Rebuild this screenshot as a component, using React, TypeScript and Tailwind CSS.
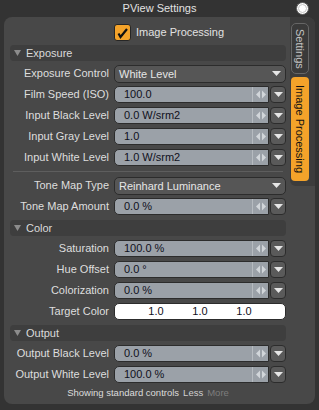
import React from 'react';

const FONT = "font-['Liberation_Sans',Arial,sans-serif]";

const SliderArrows: React.FC = () => (
  <svg width="10" height="9" viewBox="0 0 10 9">
    <polygon points="4,0.5 4,8.5 0,4.5" fill="#d2d6da" />
    <polygon points="6,0.5 6,8.5 10,4.5" fill="#d2d6da" />
  </svg>
);

const DownTri: React.FC = () => (
  <svg width="9" height="5" viewBox="0 0 9 5">
    <polygon points="0,0 9,0 4.5,5" fill="#e6e6e6" />
  </svg>
);

const Label: React.FC<{ text: string }> = ({ text }) => (
  <div className="w-[99px] shrink-0 text-right text-[11px] leading-[17px] text-[#dedede] whitespace-nowrap">{text}</div>
);

const NumberRow: React.FC<{ label: string; value: string }> = ({ label, value }) => (
  <div className="flex h-[17px] items-center gap-[5px]">
    <Label text={label} />
    <div className="flex h-[17px] w-[172px]">
      <div className="flex flex-1 rounded-l-[5px] border border-[#2c2c2c] bg-[#9ba1a8]">
        <div className="flex-1 pl-[9px] text-[11px] leading-[15px] text-[#10101c]">{value}</div>
        <div className="flex w-[16px] items-center justify-center border-l border-[#b6bbc0]">
          <SliderArrows />
        </div>
      </div>
      <div className="ml-px flex w-[16px] items-center justify-center rounded-[4px] border border-[#2c2c2c] bg-[#5a5a5a]">
        <DownTri />
      </div>
    </div>
  </div>
);

const ChoiceRow: React.FC<{ label: string; value: string }> = ({ label, value }) => (
  <div className="flex h-[17px] items-center gap-[5px]">
    <Label text={label} />
    <div className="flex h-[18px] w-[172px] items-center justify-between rounded-[5px] border border-[#2c2c2c] bg-[#565656] pl-[4px] pr-[4px]">
      <span className="text-[11px] leading-[16px] text-[#e6e6e6]">{value}</span>
      <DownTri />
    </div>
  </div>
);

const Header: React.FC<{ title: string; first?: boolean }> = ({ title, first }) => (
  <div
    className={`flex h-[16px] items-center gap-[5px] rounded-[4px] bg-[#3e3e3e] pl-[4px] ${first ? 'mt-[4px]' : 'mt-[5px]'}`}
  >
    <svg width="7" height="6" viewBox="0 0 7 6">
      <polygon points="0,0 7,0 3.5,6" fill="#8c8c8c" />
    </svg>
    <span className="text-[11px] leading-[16px] text-[#dadada]">{title}</span>
  </div>
);

const App: React.FC = () => {
  return (
    <div className={`h-[410px] w-[319px] bg-[#333333] ${FONT}`}>
      {/* title bar */}
      <div className="grid h-[17px] grid-cols-[1fr_auto_1fr] items-center">
        <div />
        <div className="text-[11px] leading-[17px] text-[#e2e2e2]">PView Settings</div>
        <div className="flex justify-end pr-[10px]">
          <div className="flex h-[13px] w-[13px] items-center justify-center rounded-full border border-[#5a5a5a] bg-white">
            <div className="h-[9px] w-[9px] rounded-full border border-[#c4c4c4] bg-white" />
          </div>
        </div>
      </div>

      {/* panel */}
      <div className="mx-[4px] flex h-[387px] w-[311px] overflow-hidden rounded-[8px] bg-[#484848]">
        <div className="ml-[6px] w-[277px] pt-[6px]">
          {/* enable */}
          <div className="flex h-[18px] items-center gap-[5px] pl-[104px]">
            <div className="flex h-[17px] w-[17px] items-center justify-center rounded-[3px] border border-[#262626] bg-[#f4a32a]">
              <svg width="13" height="13" viewBox="0 0 13 13">
                <polyline points="2.5,7.5 4.5,11 11,3" fill="none" stroke="#111" strokeWidth="2.2" />
              </svg>
            </div>
            <span className="text-[11px] text-[#e2e2e2]">Image Processing</span>
          </div>

          <Header title="Exposure" first />
          <div className="mt-[4px] flex flex-col gap-[4px]">
            <ChoiceRow label="Exposure Control" value="White Level" />
            <NumberRow label="Film Speed (ISO)" value="100.0" />
            <NumberRow label="Input Black Level" value="0.0 W/srm2" />
            <NumberRow label="Input Gray Level" value="1.0" />
            <NumberRow label="Input White Level" value="1.0 W/srm2" />
          </div>
          <div className="mx-[3px] mt-[5px] h-px bg-[#5e5e5e]" />
          <div className="mt-[5px] flex flex-col gap-[4px]">
            <ChoiceRow label="Tone Map Type" value="Reinhard Luminance" />
            <NumberRow label="Tone Map Amount" value="0.0 %" />
          </div>

          <Header title="Color" />
          <div className="mt-[4px] flex flex-col gap-[4px]">
            <NumberRow label="Saturation" value="100.0 %" />
            <NumberRow label="Hue Offset" value="0.0 °" />
            <NumberRow label="Colorization" value="0.0 %" />
            <div className="flex h-[17px] items-center gap-[5px]">
              <Label text="Target Color" />
              <div className="grid h-[17px] w-[172px] grid-cols-3 rounded-[5px] border border-[#2c2c2c] bg-white px-[19px] text-center text-[11px] leading-[15px] text-[#10101c]">
                <span>1.0</span>
                <span>1.0</span>
                <span>1.0</span>
              </div>
            </div>
          </div>

          <Header title="Output" />
          <div className="mt-[4px] flex flex-col gap-[4px]">
            <NumberRow label="Output Black Level" value="0.0 %" />
            <NumberRow label="Output White Level" value="100.0 %" />
          </div>

          <div className="mt-[3px] flex h-[14px] items-center justify-center gap-[4px] text-[9.5px]">
            <span className="text-[#dcdcdc]">Showing standard controls</span>
            <span className="text-[#cfcfcf]">Less</span>
            <span className="text-[#7d7d7d]">More</span>
          </div>
        </div>

        {/* tabs */}
        <div className="ml-[4px] flex h-[169px] w-[28px] flex-col gap-[3px] rounded-bl-[6px] bg-[#3c3c3c] pl-[1px] pt-[6px]">
          <div className="flex h-[51px] w-[18px] items-center justify-center rounded-[5px] border border-[#666666] bg-[#3a3a3a]">
            <span className="text-[11px] text-[#c4c4c4] [writing-mode:vertical-rl]">Settings</span>
          </div>
          <div className="flex h-[104px] w-[18px] items-center justify-center rounded-[4px] bg-[#f4a32a]">
            <span className="text-[11px] text-[#111111] [writing-mode:vertical-rl]">Image Processing</span>
          </div>
        </div>
      </div>
    </div>
  );
};

export default App;
